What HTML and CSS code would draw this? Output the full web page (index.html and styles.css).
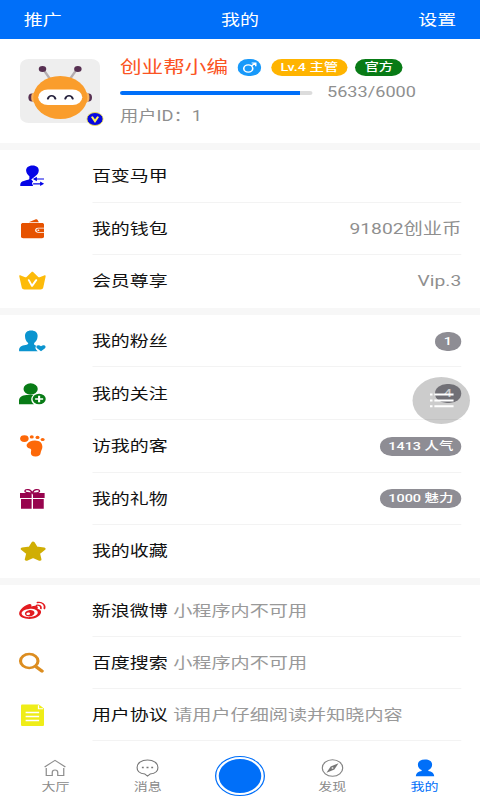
FILE: index.html
```html
<!DOCTYPE html>
<html lang="zh-CN">
<head>
<meta charset="utf-8">
<title>我的</title>
<link rel="stylesheet" href="styles.css">
</head>
<body>
<div class="screen">
  <header class="navbar"><span>推广</span><span>我的</span><span>设置</span></header>

  <section class="profile">
    <div class="avatar">
      <svg viewBox="0 0 64 64" width="64" height="64">
        <rect width="64" height="64" rx="7" fill="#eee"/>
        <path d="M19 11l5 9M45 11l-5 9" stroke="#b5aeb1" stroke-width="2"/>
        <circle cx="18" cy="10" r="3" fill="#573052"/><circle cx="46.300" cy="10" r="3" fill="#573052"/>
        <ellipse cx="9.500" cy="38.500" rx="2.800" ry="4" fill="#573052"/><ellipse cx="54.800" cy="38.500" rx="2.800" ry="4" fill="#573052"/>
        <rect x="9" y="33" width="46.500" height="11" rx="4" fill="#fab45d"/>
        <circle cx="32.200" cy="38.500" r="21.600" fill="#fa9d2c"/>
        <rect x="14.600" y="30.500" width="35.200" height="15.500" rx="7.700" fill="#fff"/>
        <path d="M22.300 39.800c1-4 5-4 6 0M36.200 39.800c1-4 5-4 6 0" fill="none" stroke="#25213c" stroke-width="1.600" stroke-linecap="round"/>
      </svg>
      <svg class="verified" viewBox="0 0 14 14" width="14" height="14"><circle cx="7" cy="7" r="6.500" fill="#0808df" stroke="#f1e64d" stroke-width=".8"/><path d="M4.500 4.700L7 9.200l2.500-4.500" fill="none" stroke="#fff35a" stroke-width="1.700"/></svg>
    </div>
    <div class="info">
      <div class="name-line">
        <span class="name">创业帮小编</span>
        <svg class="gender" viewBox="0 0 19 17" width="19" height="17"><rect width="19" height="17" rx="8.500" fill="#1899fa"/><circle cx="8.600" cy="9.500" r="3.600" fill="none" stroke="#fff" stroke-width="1.300"/><path d="M11 7l3.200-2.700M11.300 4h3.300v3.300" fill="none" stroke="#fff" stroke-width="1.200"/></svg>
        <span class="tag level">Lv.4 主管</span>
        <span class="tag official">官方</span>
      </div>
      <div class="progress-line"><div class="track"><div class="fill"></div></div><span>5633/6000</span></div>
      <div class="uid">用户ID：1</div>
    </div>
  </section>

  <section class="group">
    <div class="row">
      <svg class="icon" viewBox="0 0 22 22" fill="#0505e6"><path d="M11 .5c3.500 0 5.200 2.300 5 5.300-.2 2.600-1.300 4.200-2.600 5.200L10 14.500l1.500 2-1 1.500 1 3H1.200c0-3.500.8-4.500 4-5.500 2-.6 3.300-1 3.300-2v-2.300C7 10 6 8 5.900 5.800 5.800 2.800 7.600.5 11 .5z"/><path d="M12.500 14h7.700M11.500 18.800h7.200" stroke="#0505e6" stroke-width="1.200"/><path d="M11.300 14l3.200-2.200v4.400zM20.300 18.800l-3.200-2.200V21z"/></svg>
      <div class="cell"><span class="label">百变马甲</span></div>
    </div>
    <div class="row">
      <svg class="icon" viewBox="0 0 22 22" fill="#e65200"><path d="M8 4.300l5.200-2.700c1-.5 1.600-.3 2 .6l.9 2.100zM3.600 5h15c1 0 1.600.7 1.600 1.600v3.200h-4.700c-3.200 0-3.200 5 0 5h4.700v3.800c0 1-.6 1.600-1.600 1.600h-15c-1.100 0-1.800-.7-1.800-1.700v-12C1.800 5.600 2.500 5 3.600 5z"/><path d="M15.600 10.600h4.600V14h-4.600c-2 0-2-3.400 0-3.400z"/><circle cx="15.700" cy="12.300" r=".8" fill="#fff"/></svg>
      <div class="cell"><span class="label">我的钱包</span><span class="value">91802创业币</span></div>
    </div>
    <div class="row">
      <svg class="icon" viewBox="0 0 22 22"><path d="M.4 6.300c-.2-.8.500-1.200 1.200-.8l3.500 1.700c.4.200.8.100 1.100-.2l3.900-4.700c.5-.6 1.100-.6 1.600 0L15.600 7c.3.300.7.400 1.100.2l3.600-1.700c.8-.4 1.300.1 1.200.9l-1.900 11c-.2 1.300-1 2-2.200 2H4.600c-1.200 0-2-.7-2.200-2z" fill="#fdbb0a"/><path d="M8 10l2.600 6L14 10" fill="none" stroke="#fff" stroke-width="1.600" stroke-linecap="round" stroke-linejoin="round"/></svg>
      <div class="cell"><span class="label">会员尊享</span><span class="value">Vip.3</span></div>
    </div>
  </section>

  <section class="group">
    <div class="row">
      <svg class="icon" viewBox="0 0 22 22" fill="#0b94cf"><path d="M9.900.5c3.400 0 5.200 2.200 5.200 5.400 0 3-1.300 5.700-2.800 7v1.500c.4.700 1 1 1.900 1.300-1.500 1.300-1 3.300 1 5.500H.3c-.2-3.800 1-5.200 4-6 1.800-.4 2.700-.8 3.200-1.300v-1C5.900 11.500 5 8.900 5 5.900 5 2.700 6.700.5 9.900.5z"/><path d="M17.800 21.200l-3.200-2.900c-1.500-2.200.9-4.200 3.200-2.100 2.300-2.100 4.700-.1 3.200 2.100z"/></svg>
      <div class="cell"><span class="label">我的粉丝</span><span class="badge">1</span></div>
    </div>
    <div class="row">
      <svg class="icon" viewBox="0 0 22 22" fill="#087b16"><circle cx="9.500" cy="6" r="5.700"/><path d="M.2 21.300v-3.200c0-3.800 2.300-5.800 6-6h5.500c-2.300 2.500-2.400 6.500.5 9.200z"/><circle cx="16.300" cy="16" r="5.300"/><path d="M16.300 12.800v6.400M13.100 16h6.400" stroke="#fff" stroke-width="1.700"/></svg>
      <div class="cell"><span class="label">我的关注</span><span class="badge">4</span></div>
    </div>
    <div class="row">
      <svg class="icon" viewBox="0 0 22 22" fill="#fd6808"><circle cx="4.500" cy="3.600" r="3.400"/><circle cx="10.400" cy="1.900" r="1.600"/><circle cx="15" cy="2.400" r="1.600"/><circle cx="19.100" cy="4.500" r="1.600"/><path d="M6.400 9.400C7.500 6.800 10.300 5.400 13 5.500c4 .1 6 2.700 5.900 6.500-.1 2.400-1.200 3.800-1.400 6-.1 2.400-1.900 3.600-4.100 3.500-2.500-.1-3.900-1.500-3.700-3.700.2-2.400.8-3.400-.9-4.300-1.800-.8-3-2.100-2.400-4.100z"/></svg>
      <div class="cell"><span class="label">访我的客</span><span class="badge">1413 人气</span></div>
    </div>
    <div class="row">
      <svg class="icon" viewBox="0 0 22 22" fill="#98044e"><path d="M1 5h9.300v5H1zM11.400 5h9.300v5h-9.300zM1.800 11h8.500v9.700H1.800zM11.400 11H20v9.700h-8.600z"/><path d="M10.700 5C8 5 5 4.400 5 3.200c0-1.400 1.300-1.700 2.500-1.600 1.700.2 2.600 1.600 3.300 3.400.7-1.800 1.600-3.200 3.300-3.400 1.200-.1 2.500.2 2.500 1.600 0 1.200-3.100 1.800-5.900 1.800z" fill="none" stroke="#98044e" stroke-width="1.200"/></svg>
      <div class="cell"><span class="label">我的礼物</span><span class="badge">1000 魅力</span></div>
    </div>
    <div class="row">
      <svg class="icon" viewBox="0 0 22 22" fill="#d0ae04" stroke="#d0ae04" stroke-width="2.600" stroke-linejoin="round"><path d="M11.500 2.800l2.500 5.100 6.200.9-4.500 4.400 1.200 6.300-5.400-2.800-5.400 2.800 1.200-6.300-4.500-4.400 6.200-.9z"/></svg>
      <div class="cell"><span class="label">我的收藏</span></div>
    </div>
  </section>

  <section class="group links">
    <div class="row">
      <svg class="icon" viewBox="0 0 22 22"><path fill="#e31b20" fill-rule="evenodd" d="M8.600 4c1.400-.2 1.900.9 1.400 2.600 2-.8 4.200-1.200 5 0 .4.600.3 1.300 0 2.200 2.200.7 3.200 2 2.800 4-.7 3.500-5 6.200-9.300 6.200C4 19 .3 17 .3 13.600.3 9.800 5.300 4.500 8.600 4zM8.400 8.900c-3.600.3-6.300 2.300-6.100 4.700.2 2.300 3.200 3.800 6.700 3.500 3.600-.3 6.400-2.400 6.200-4.800-.2-2.300-3.300-3.700-6.800-3.400z"/><path fill="#e31b20" fill-rule="evenodd" d="M8.200 10.200c2.200-.5 4.300.7 4.400 2.600.1 1.800-1.500 3.300-3.700 3.600-2.100.2-3.900-.9-4-2.700 0-1.700 1.400-3.100 3.300-3.500zM7.500 12.500c-.9.100-1.500.8-1.400 1.500.1.800.8 1.200 1.600 1.100.9-.1 1.500-.8 1.400-1.500-.1-.8-.8-1.200-1.600-1.100z"/><path d="M14.200 5.300c2.300-.7 4 1 3.500 3.200M15 2.500c3.800-.8 6.500 2.400 5.500 6" fill="none" stroke="#e31b20" stroke-width="1.400" stroke-linecap="round"/></svg>
      <div class="cell"><span class="label">新浪微博</span><span class="note">小程序内不可用</span></div>
    </div>
    <div class="row">
      <svg class="icon" viewBox="0 0 22 22" fill="none" stroke="#dc8d20" stroke-linecap="round"><circle cx="8.400" cy="9" r="7" stroke-width="2.500"/><path d="M14 14.800l4.600 4.300" stroke-width="3"/></svg>
      <div class="cell"><span class="label">百度搜索</span><span class="note">小程序内不可用</span></div>
    </div>
    <div class="row">
      <svg class="icon" viewBox="0 0 22 22"><path d="M3 .5h13l4.200 4V20.800c0 .8-.4 1.200-1.200 1.200H3c-.8 0-1.200-.4-1.200-1.200V1.700C1.800.9 2.200.5 3 .5z" fill="#efed18"/><path d="M15.800 1.200v3.600h3.700" fill="none" stroke="#fff"/><path d="M5.500 8.500h10.800M5.500 12.500h10.800M5.500 16.500h10.800" stroke="#fff" stroke-width="1.700"/></svg>
      <div class="cell"><span class="label">用户协议</span><span class="note">请用户仔细阅读并知晓内容</span></div>
    </div>
  </section>

  <nav class="tabs">
    <div class="tab"><svg viewBox="0 0 18 18" fill="none" stroke="#8e8e8e"><path d="M.7 8L9 1.300 17.300 8M2 9v7.500h4.800v-3c0-3.300 4.400-3.300 4.400 0v3H16V9"/></svg><span>大厅</span></div>
    <div class="tab"><svg viewBox="0 0 18 18" fill="none" stroke="#777"><path d="M7 15.100C2.800 14.500.6 12 .6 8.500c0-4.400 3.500-7.600 8.400-7.600s8.400 3.200 8.400 7.600c0 3.500-2.200 6-6.400 6.600L9 17z"/><path d="M4.500 8.500h1.500M8.200 8.500h1.600M12 8.500h1.500" stroke-width="1.700"/></svg><span>消息</span></div>
    <div class="tab"><div class="main-button"></div></div>
    <div class="tab"><svg viewBox="0 0 18 18" fill="none" stroke="#858585"><circle cx="9" cy="9" r="8.200"/><path d="M13.800 4.200L10.500 10.500 4.200 13.800 7.500 7.500z" fill="#777" stroke="none"/><circle cx="9" cy="9" r=".8" fill="#fff" stroke="none"/></svg><span>发现</span></div>
    <div class="tab active"><svg viewBox="0 0 18 18" fill="#006ff9"><path d="M9 .6c3.800 0 5.700 2.200 5.700 5.200 0 2.400-1.300 4.300-3 5.300v.9c2.600.6 4.400 1.900 4.700 5.200H1.600c.3-3.300 2.100-4.600 4.700-5.200v-.9c-1.700-1-3-2.900-3-5.300 0-3 1.900-5.200 5.700-5.200z"/></svg><span>我的</span></div>
  </nav>

  <div class="float-menu"><svg viewBox="0 0 19 15" width="19" height="15" stroke="#fff" stroke-width="2"><path d="M0 1.500h2M3.500 1.500H19M0 7.500h2M3.500 7.500H19M0 13.300h2M3.500 13.300H19"/></svg></div>
</div>
</body>
</html>
```
FILE: styles.css
```css
* { box-sizing: border-box; }
body { margin: 0; width: 480px; height: 800px; overflow: hidden; background: #fff; }

/* A 384px wide layout, widened to the 480px window. */
.screen {
  position: relative;
  width: 384px;
  height: 800px;
  transform: scaleX(1.25);
  transform-origin: 0 0;
  display: flex;
  flex-direction: column;
  background: #fff;
  color: #111;
  font-family: Roboto, "Noto Sans CJK SC", sans-serif;
  font-size: 15.2px;
  line-height: 20px;
  white-space: nowrap;
}

.navbar {
  flex: none;
  height: 39px;
  padding: 0 19px;
  display: flex;
  align-items: center;
  justify-content: space-between;
  background: #006ff9;
  color: #fff;
}

.profile { flex: none; height: 104px; padding: 20px 16px; display: flex; gap: 16px; }
.avatar { position: relative; width: 64px; height: 64px; }
.avatar svg { display: block; }
.avatar .verified { position: absolute; left: 53px; top: 53px; }
.info { flex: 1; display: flex; flex-direction: column; margin-top: -3px; }
.info > div { flex: none; }
.name-line { height: 22px; display: flex; align-items: center; }
.name { width: 94px; font-size: 17.300px; color: #fb5423; }
.gender { margin-right: 8px; }
.tag {
  height: 17px;
  border-radius: 9px;
  font-size: 11.500px;
  line-height: 17px;
  font-weight: 500;
  text-align: center;
  color: #fff;
}
.level { width: 61px; margin-right: 6px; background: #ffb400; }
.official { width: 38px; background: #087b16; }
.progress-line { height: 26px; margin-top: 2px; display: flex; align-items: center; gap: 12px; font-size: 14.500px; color: #8f8f8f; }
.progress-line span { margin-top: -1px; }
.track { width: 153.600px; height: 4px; border-radius: 2px; background: #dcdcdc; overflow: hidden; }
.fill { width: 94%; height: 4px; background: #006ff9; }
.uid { font-size: 14.600px; color: #8f8f8f; }

.group { flex: none; border-top: 7px solid #f7f7f7; }
.row { height: 52.600px; display: flex; align-items: center; padding: 0 15px; }
.links .row { height: 52.200px; }
.icon { display: block; width: 22px; height: 22px; margin-right: 36.500px; }
.cell { flex: 1; height: 100%; display: flex; align-items: center; padding-top: 1px; border-bottom: 1px solid #f3f3f3; }
.row:last-child .cell { border-bottom-color: transparent; }
.links .row:last-child .cell { border-bottom-color: #f3f3f3; }
.value { margin-left: auto; font-size: 15.400px; color: #8f8f8f; }
.note { margin-left: 4.300px; font-size: 15.300px; color: #999; }
.badge {
  margin-left: auto;
  height: 19px;
  padding: 0 6.300px;
  min-width: 21.500px;
  border-radius: 10px;
  background: #8e8d94;
  color: #fff;
  font-size: 11.500px;
  font-weight: 500;
  line-height: 19px;
  text-align: center;
}

.tabs { flex: 1; padding: 0 7.500px; display: flex; background: #fff; }
.tab { flex: 1; display: flex; flex-direction: column; align-items: center; padding-top: 18px; font-size: 11.200px; line-height: 16px; color: #8a8a8a; }
.tab svg { display: block; width: 18px; height: 18px; margin-bottom: 2.500px; }
.tab.active { color: #006ff9; }
.main-button { width: 40px; height: 40px; margin-top: -3px; border: 1.200px solid #006ff9; border-radius: 50%; padding: 2px; background: #006ff9 content-box; background-clip: content-box; }

.float-menu {
  position: absolute;
  left: 330px;
  top: 377px;
  width: 46px;
  height: 47px;
  border-radius: 50%;
  background: rgba(0, 0, 0, .2);
  display: flex;
  align-items: center;
  justify-content: center;
}
```
